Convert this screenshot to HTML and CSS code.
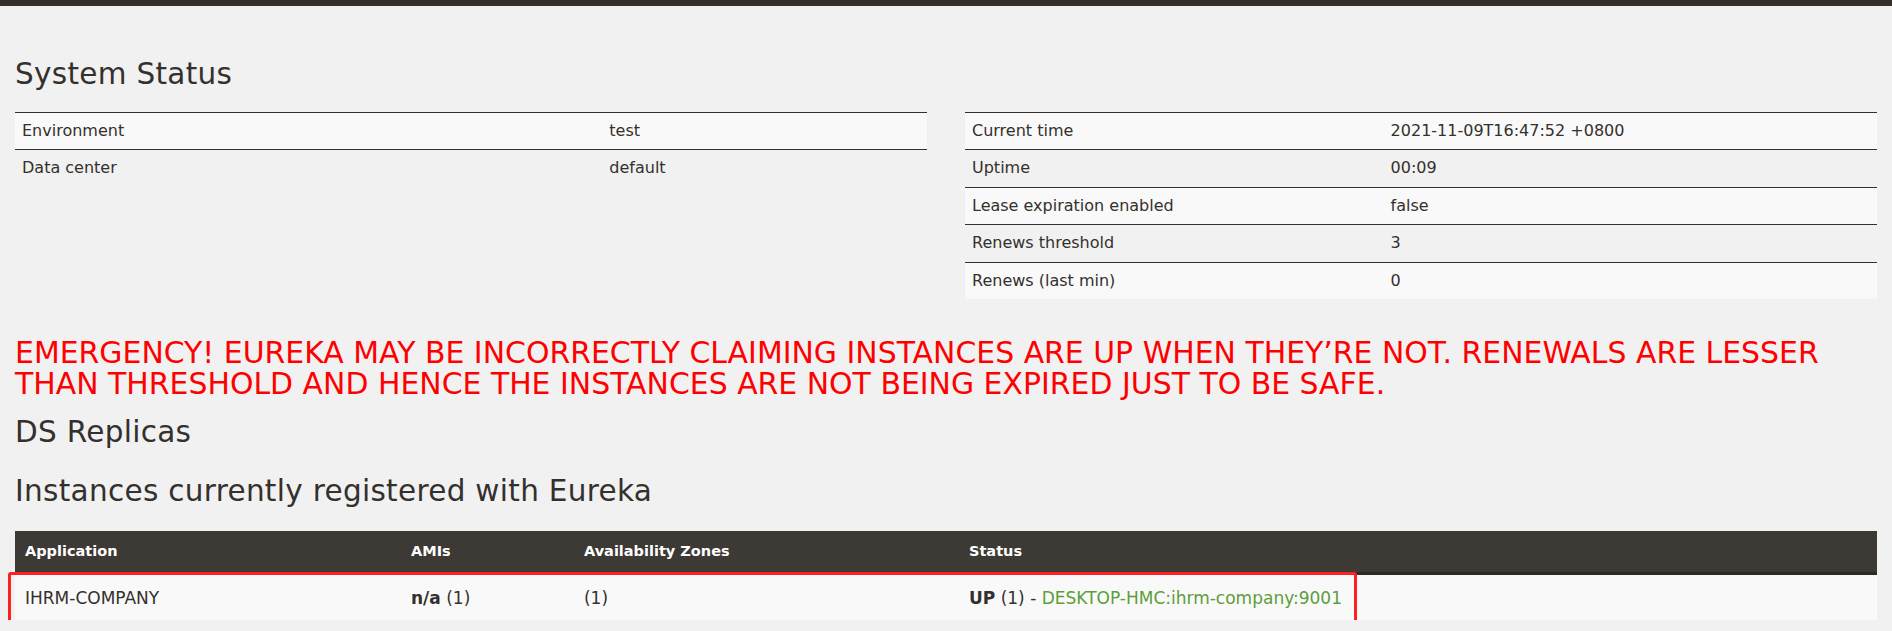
FILE: index.html
```html
<!DOCTYPE html>
<html lang="en">
<head>
<meta charset="utf-8">
<title>Eureka</title>
<link rel="stylesheet" href="styles.css">
</head>
<body>
<nav class="topbar"></nav>
<div class="container">
  <h2 class="section-title title-system">System Status</h2>
  <div class="status-grid">
    <table class="kv-table kv-left">
      <tbody>
        <tr><td class="kv-key">Environment</td><td>test</td></tr>
        <tr><td class="kv-key">Data center</td><td>default</td></tr>
      </tbody>
    </table>
    <table class="kv-table kv-right">
      <tbody>
        <tr><td class="kv-key">Current time</td><td>2021-11-09T16:47:52 +0800</td></tr>
        <tr><td class="kv-key">Uptime</td><td>00:09</td></tr>
        <tr><td class="kv-key">Lease expiration enabled</td><td>false</td></tr>
        <tr><td class="kv-key">Renews threshold</td><td>3</td></tr>
        <tr><td class="kv-key">Renews (last min)</td><td>0</td></tr>
      </tbody>
    </table>
  </div>
  <h4 class="emergency">EMERGENCY! EUREKA MAY BE INCORRECTLY CLAIMING INSTANCES ARE UP WHEN THEY’RE NOT. RENEWALS ARE LESSER THAN THRESHOLD AND HENCE THE INSTANCES ARE NOT BEING EXPIRED JUST TO BE SAFE.</h4>
  <h2 class="section-title title-ds">DS Replicas</h2>
  <h2 class="section-title title-inst">Instances currently registered with Eureka</h2>
  <div class="instances-wrap">
    <table class="instances">
      <thead>
        <tr><th class="c-app">Application</th><th class="c-ami">AMIs</th><th class="c-az">Availability Zones</th><th>Status</th></tr>
      </thead>
      <tbody>
        <tr><td>IHRM-COMPANY</td><td><b>n/a</b> (1)</td><td>(1)</td><td><b>UP</b> (1) - <a class="inst-link" href="#">DESKTOP-HMC:ihrm-company:9001</a></td></tr>
      </tbody>
    </table>
    <div class="highlight"></div>
  </div>
</div>
</body>
</html>
```

FILE: styles.css
```css
* { box-sizing: border-box; }
html, body { margin: 0; }
body {
  background: #f1f1f1;
  color: #34302d;
  font-family: "DejaVu Sans", "Open Sans", sans-serif;
  font-size: 16px;
}
.topbar { height: 6px; background: #34302d; }
.container { padding: 0 15px; }

.section-title {
  font-family: "DejaVu Sans", sans-serif;
  font-weight: normal;
  font-size: 29.5px;
  line-height: 34px;
  letter-spacing: 0.3px;
  margin: 0;
  color: #34302d;
}
.title-system { margin-top: 51px; margin-bottom: 21px; }
.title-ds { margin-top: 16px; }
.title-inst { margin-top: 25px; }

.status-grid {
  display: grid;
  grid-template-columns: 1fr 1fr;
  column-gap: 38px;
  align-items: start;
}
.kv-table { width: 100%; border-collapse: collapse; }
.kv-table td {
  border-top: 1px solid #34302d;
  padding: 8px 7px;
  line-height: 20.4px;
  vertical-align: top;
}
.kv-table tr:nth-child(odd) td { background: #f9f9f9; }
.kv-left .kv-key { width: 64.4%; }
.kv-right .kv-key { width: 45.9%; }

.emergency {
  margin: 38px 0 0;
  color: #ff0000;
  font-family: "DejaVu Sans", sans-serif;
  font-weight: normal;
  font-size: 29.9px;
  line-height: 31px;
}

.instances-wrap { position: relative; margin-top: 23px; }
.instances { width: 100%; border-collapse: collapse; }
.instances th {
  background: #3d3934;
  color: #ffffff;
  text-align: left;
  font-weight: bold;
  font-size: 14.5px;
  line-height: 21px;
  padding: 10px 10px;
  border-bottom: 3px solid #2c2926;
}
.instances td {
  background: #f9f9f9;
  padding: 13px 10px 12px;
  font-size: 17px;
  line-height: 20px;
}
.c-app { width: 20.73%; }
.c-ami { width: 9.29%; }
.c-az { width: 20.68%; }
.inst-link { color: #5c9e3a; text-decoration: none; }

.highlight {
  position: absolute;
  left: -7px;
  top: 41px;
  width: 1349px;
  height: 51px;
  border: 3px solid #ff2020;
  border-radius: 3px;
  pointer-events: none;
}
```
